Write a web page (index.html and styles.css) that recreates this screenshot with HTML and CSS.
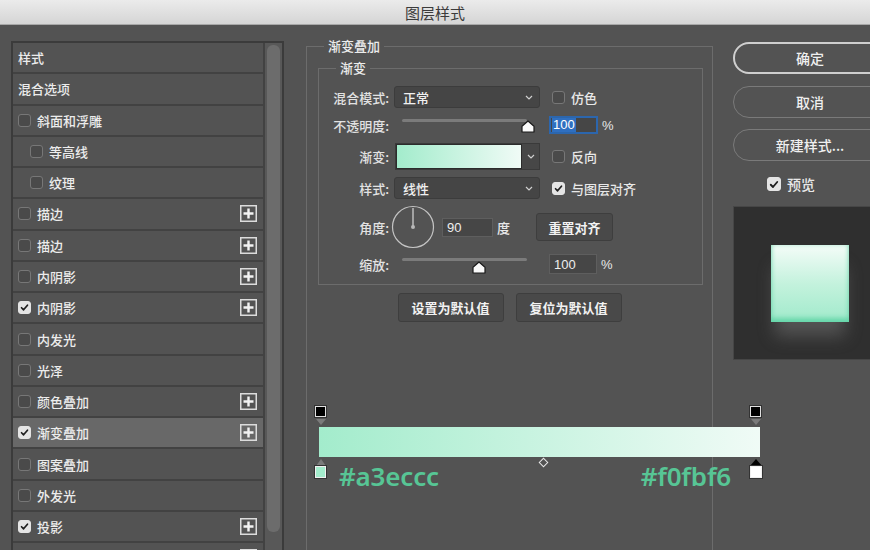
FILE: index.html
```html
<!DOCTYPE html>
<html lang="zh">
<head>
<meta charset="utf-8">
<title>图层样式</title>
<link rel="stylesheet" href="styles.css">
</head>
<body>
<div class="titlebar">图层样式</div>
<div class="content">
  <div class="stylelist">
    <div class="rows">
      <div class="row">样式</div>
      <div class="row">混合选项</div>
      <div class="row"><span class="cb"></span>斜面和浮雕</div>
      <div class="row indent"><span class="cb"></span>等高线</div>
      <div class="row indent"><span class="cb"></span>纹理</div>
      <div class="row"><span class="cb"></span>描边<svg class="plus" viewBox="0 0 17 17"><rect x="0.75" y="0.75" width="15.5" height="15.5"/><path d="M8.5 3.5V13.5M3.5 8.5H13.5"/></svg></div>
      <div class="row"><span class="cb"></span>描边<svg class="plus" viewBox="0 0 17 17"><rect x="0.75" y="0.75" width="15.5" height="15.5"/><path d="M8.5 3.5V13.5M3.5 8.5H13.5"/></svg></div>
      <div class="row"><span class="cb"></span>内阴影<svg class="plus" viewBox="0 0 17 17"><rect x="0.75" y="0.75" width="15.5" height="15.5"/><path d="M8.5 3.5V13.5M3.5 8.5H13.5"/></svg></div>
      <div class="row"><span class="cb on"><svg viewBox="0 0 13 13"><path d="M3 6.8L5.4 9.2L10 3.8"/></svg></span>内阴影<svg class="plus" viewBox="0 0 17 17"><rect x="0.75" y="0.75" width="15.5" height="15.5"/><path d="M8.5 3.5V13.5M3.5 8.5H13.5"/></svg></div>
      <div class="row"><span class="cb"></span>内发光</div>
      <div class="row"><span class="cb"></span>光泽</div>
      <div class="row"><span class="cb"></span>颜色叠加<svg class="plus" viewBox="0 0 17 17"><rect x="0.75" y="0.75" width="15.5" height="15.5"/><path d="M8.5 3.5V13.5M3.5 8.5H13.5"/></svg></div>
      <div class="row selected"><span class="cb on"><svg viewBox="0 0 13 13"><path d="M3 6.8L5.4 9.2L10 3.8"/></svg></span>渐变叠加<svg class="plus" viewBox="0 0 17 17"><rect x="0.75" y="0.75" width="15.5" height="15.5"/><path d="M8.5 3.5V13.5M3.5 8.5H13.5"/></svg></div>
      <div class="row"><span class="cb"></span>图案叠加</div>
      <div class="row"><span class="cb"></span>外发光</div>
      <div class="row"><span class="cb on"><svg viewBox="0 0 13 13"><path d="M3 6.8L5.4 9.2L10 3.8"/></svg></span>投影<svg class="plus" viewBox="0 0 17 17"><rect x="0.75" y="0.75" width="15.5" height="15.5"/><path d="M8.5 3.5V13.5M3.5 8.5H13.5"/></svg></div>
      <div class="row"><span class="cb"></span><svg class="plus" viewBox="0 0 17 17"><rect x="0.75" y="0.75" width="15.5" height="15.5"/><path d="M8.5 3.5V13.5M3.5 8.5H13.5"/></svg></div>
    </div>
    <div class="scroll"><div class="thumb"></div></div>
  </div>

  <div class="center">
    <div class="group outer">
      <div class="group-title">渐变叠加</div>
      <div class="group inner">
        <div class="group-title">渐变</div>

        <div class="frow r1">
          <span class="flabel">混合模式:</span>
          <div class="select"><span>正常</span><svg class="chev" viewBox="0 0 8 5"><path d="M1 1L4 4L7 1"/></svg></div>
          <span class="cb opt"></span><span>仿色</span>
        </div>

        <div class="frow r2">
          <span class="flabel">不透明度:</span>
          <div class="slider"><div class="track"></div><svg class="knob k-opacity" viewBox="0 0 14 13"><path d="M7 1L13 6.2V12H1V6.2Z"/></svg></div>
          <div class="num focus"><span class="sel">100</span></div>
          <span class="pct">%</span>
        </div>

        <div class="frow r3">
          <span class="flabel">渐变:</span>
          <div class="gradfield"><div class="swatch"></div><div class="gdrop"><svg class="chev" viewBox="0 0 8 5"><path d="M1 1L4 4L7 1"/></svg></div></div>
          <span class="cb opt"></span><span>反向</span>
        </div>

        <div class="frow r4">
          <span class="flabel">样式:</span>
          <div class="select"><span>线性</span><svg class="chev" viewBox="0 0 8 5"><path d="M1 1L4 4L7 1"/></svg></div>
          <span class="cb on opt"><svg viewBox="0 0 13 13"><path d="M3 6.8L5.4 9.2L10 3.8"/></svg></span><span>与图层对齐</span>
        </div>

        <div class="frow r5">
          <span class="flabel">角度:</span>
          <svg class="dial" viewBox="0 0 44 44"><circle cx="22" cy="22" r="20.5"/><path d="M22 22V3"/><circle class="dot" cx="22" cy="22" r="2"/></svg>
          <div class="num n90">90</div>
          <span class="unit">度</span>
          <div class="btn reset">重置对齐</div>
        </div>

        <div class="frow r6">
          <span class="flabel">缩放:</span>
          <div class="slider"><div class="track"></div><svg class="knob k-scale" viewBox="0 0 14 13"><path d="M7 1L13 6.2V12H1V6.2Z"/></svg></div>
          <div class="num n100">100</div>
          <span class="pct">%</span>
        </div>
      </div>
      <div class="btn-row">
        <div class="btn def">设置为默认值</div>
        <div class="btn def">复位为默认值</div>
      </div>
    </div>
  </div>

  <div class="right">
    <div class="pill primary">确定</div>
    <div class="pill p2">取消</div>
    <div class="pill p3">新建样式...</div>
    <div class="preview-check"><span class="cb on big"><svg viewBox="0 0 13 13"><path d="M3 6.8L5.4 9.2L10 3.8"/></svg></span>预览</div>
    <div class="preview"><div class="sample"></div></div>
  </div>
</div>

<div class="gradient-editor">
  <div class="stops-top">
    <div class="tstop"><div class="tsq"></div><div class="tri-down"></div></div>
    <div class="tstop"><div class="tsq"></div><div class="tri-down"></div></div>
  </div>
  <div class="gbar"></div>
  <div class="stops-bottom">
    <div class="bstop"><div class="tri-up"></div><div class="bsq green"></div></div>
    <span class="hex">#a3eccc</span>
    <span class="mid"></span>
    <span class="hex hex-r">#f0fbf6</span>
    <div class="bstop"><div class="tri-up dark"></div><div class="bsq white"></div></div>
  </div>
</div>
</body>
</html>
```

FILE: styles.css
```css
* { box-sizing: border-box; }

body {
  margin: 0;
  width: 870px;
  height: 550px;
  overflow: hidden;
  position: relative;
  background: #535353;
  font-family: "Noto Sans CJK SC", "Noto Sans", sans-serif;
  font-size: 13px;
  font-weight: 500;
  color: #e8e8e8;
}

.titlebar {
  height: 25px;
  display: flex;
  align-items: center;
  justify-content: center;
  background: linear-gradient(#ebebeb, #d5d5d5);
  border-bottom: 1px solid #a8a8a8;
  color: #3b3b3b;
  font-size: 15px;
  font-weight: 400;
}

.content {
  display: flex;
  align-items: flex-start;
  padding: 16px 0 0 11px;
  height: 525px;
  overflow: hidden;
}

/* ---------- left style list ---------- */
.stylelist {
  flex: none;
  width: 273px;
  height: 560px;
  display: flex;
  border: 2px solid #3b3b3b;
  background: #535353;
}

.rows {
  width: 252px;
  border-right: 2px solid #424242;
}

.row {
  height: 31.27px;
  border-bottom: 2px solid #424242;
  display: flex;
  align-items: center;
  padding: 0 6px 0 5px;
  line-height: 1;
  color: #ececec;
}
.row.indent { padding-left: 17px; }
.row.selected { background: #686868; }

.cb {
  flex: none;
  width: 13px;
  height: 13px;
  border: 1px solid #777;
  border-radius: 3px;
  background: #4a4a4a;
  margin-right: 6px;
  display: flex;
  align-items: center;
  justify-content: center;
}
.cb.on {
  background: #e4e4e4;
  border-color: #e4e4e4;
}
.cb svg { width: 13px; height: 13px; }
.cb svg path {
  fill: none;
  stroke: #1e1e1e;
  stroke-width: 2;
  stroke-linecap: round;
  stroke-linejoin: round;
}

.plus {
  margin-left: auto;
  width: 17px;
  height: 17px;
}
.plus rect { fill: none; stroke: #dcdcdc; stroke-width: 1.5; }
.plus path { stroke: #f2f2f2; stroke-width: 2.4; }

.scroll {
  flex: 1;
  background: #585858;
  padding: 2px 2px 0 2px;
}
.thumb {
  height: 487px;
  border-radius: 6px;
  background: #6c6c6c;
}

/* ---------- center ---------- */
.center {
  flex: none;
  margin-left: 22px;
  margin-top: 5px;
  width: 407px;
}

.group { border: 1px solid #6c6c6c; }
.group.outer { height: 620px; }
.group-title {
  width: fit-content;
  margin: -10px 0 0 17px;
  padding: 0 4px;
  line-height: 18px;
  background: #535353;
  color: #ececec;
}
.group.inner {
  margin: 13px 9px 0 11px;
  padding-bottom: 10px;
}

.frow {
  display: flex;
  align-items: center;
}
.r1 { margin-top: 9px; height: 22px; }
.r2 { margin-top: 8px; height: 18px; }
.r3 { margin-top: 9px; height: 27px; }
.r4 { margin-top: 7px; height: 22px; }
.r5 { margin-top: 7px; height: 42px; }
.r6 { margin-top: 6px; height: 20px; }

.flabel {
  width: 70px;
  text-align: right;
  margin-right: 5px;
  color: #e2e2e2;
}

.select {
  width: 146px;
  height: 22px;
  background: #454545;
  border: 1px solid #3c3c3c;
  border-radius: 3px;
  display: flex;
  align-items: center;
  padding: 0 6px 0 8px;
  color: #f0f0f0;
}
.select .chev { margin-left: auto; }
.chev { width: 8px; height: 5px; }
.chev path { fill: none; stroke: #d0d0d0; stroke-width: 1.2; }

.opt { margin-left: 12px; margin-right: 6px; }

.slider {
  position: relative;
  width: 125px;
  height: 100%;
  margin-left: 8px;
}
.track {
  margin-top: 3px;
  height: 3px;
  border-radius: 2px;
  background: #7b7b7b;
}
.r6 .track { margin-top: 4px; }
.knob {
  position: absolute;
  width: 14px;
  height: 13px;
}
.knob path { fill: #fafafa; stroke: #1a1a1a; stroke-width: 1.2; stroke-linejoin: round; }
.k-opacity { left: 119px; top: 4px; }
.k-scale { left: 70px; top: 7px; }

.num {
  height: 18px;
  width: 49px;
  margin-left: 22px;
  background: #464646;
  border: 1px solid #5e5e5e;
  display: flex;
  align-items: center;
  padding-left: 2px;
  color: #eee;
  font-family: "Liberation Sans", sans-serif;
  font-size: 13px;
}
.num.focus {
  border: 2px solid #2c66ad;
  padding-left: 1px;
}
.sel {
  background: #2f6fc0;
  color: #fff;
  padding: 0 1px;
  line-height: 14px;
}
.pct { margin-left: 4px; font-family: "Liberation Sans", sans-serif; }

.gradfield {
  display: flex;
  margin-left: 1px;
  width: 145px;
  height: 27px;
  border: 1px solid #3a3a3a;
}
.swatch {
  flex: 1;
  background: linear-gradient(90deg, #a3eccc, #f0fbf6);
  border: 1px solid #2c2c2c;
}
.gdrop {
  width: 17px;
  background: #474747;
  display: flex;
  align-items: center;
  justify-content: center;
}

.dial { width: 44px; height: 44px; margin-left: -3px; }
.dial circle { fill: none; stroke: #c4c4c4; stroke-width: 1.2; }
.dial path { stroke: #d8d8d8; stroke-width: 1.2; }
.dial .dot { fill: #b8b8b8; stroke: none; }

.n90 { width: 51px; height: 19px; margin-left: 7px; padding-left: 4px; }
.unit { margin-left: 4px; }

.btn {
  display: flex;
  align-items: center;
  justify-content: center;
  background: #494949;
  border: 1px solid #3e3e3e;
  border-radius: 3px;
  color: #f2f2f2;
  font-weight: bold;
}
.reset { width: 77px; height: 28px; margin-left: 26px; }

.n100 { width: 48px; height: 20px; margin-left: 22px; padding-left: 4px; }

.btn-row {
  display: flex;
  justify-content: center;
  gap: 12px;
  margin-top: 8px;
}
.btn.def { width: 106px; height: 29px; }

/* ---------- right column ---------- */
.right {
  flex: none;
  width: 154px;
  margin-left: 20px;
}
.pill {
  height: 32px;
  border: 1px solid #7a7a7a;
  border-radius: 16px;
  display: flex;
  align-items: center;
  justify-content: center;
  font-size: 14px;
  color: #f0f0f0;
}
.pill.primary { margin-top: 1px; border: 2px solid #cfcfcf; }
.p2 { margin-top: 12px; }
.p3 { margin-top: 11px; }

.preview-check {
  margin-top: 16px;
  height: 14px;
  padding-left: 34px;
  display: flex;
  align-items: center;
  font-size: 14px;
}
.cb.big { width: 14px; height: 14px; }

.preview {
  margin-top: 15px;
  height: 154px;
  width: 145px;
  background: #2f2f2f;
  border: 1px solid #464646;
  padding: 38px 0 0 37px;
}
.sample {
  width: 78px;
  height: 77px;
  background: linear-gradient(#f4fcf8, #c4f2dd 50%, #a0eacb);
  box-shadow:
    inset 0 -4px 5px rgba(60, 200, 145, 0.55),
    inset 0 0 4px rgba(120, 220, 180, 0.5),
    0 18px 16px -4px rgba(140, 140, 140, 0.4);
}

/* ---------- gradient editor overlay ---------- */
.gradient-editor {
  position: absolute;
  left: 315px;
  top: 406px;
  width: 447px;
}
.stops-top {
  display: flex;
  justify-content: space-between;
  padding-right: 1px;
  height: 21px;
}
.tstop { width: 11px; }
.tsq {
  width: 11px;
  height: 11px;
  background: #000;
  border: 1px solid #e0e0e0;
  outline: 1px solid #333;
}
.tri-down {
  margin: 2px auto 0;
  width: 0;
  height: 0;
  border-left: 5px solid transparent;
  border-right: 5px solid transparent;
  border-top: 6px solid #7a7a7a;
}
.gbar {
  margin-left: 4px;
  width: 441px;
  height: 30px;
  background: linear-gradient(90deg, #a3eccc, #f0fbf6);
}
.stops-bottom {
  position: relative;
  display: flex;
  align-items: flex-start;
  margin-top: 2px;
}
.bstop { width: 12px; flex: none; }
.tri-up {
  margin: 0 auto;
  width: 0;
  height: 0;
  border-left: 5px solid transparent;
  border-right: 5px solid transparent;
  border-bottom: 7px solid #7a7a7a;
}
.tri-up.dark { border-bottom-color: #000; border-left-width: 6px; border-right-width: 6px; }
.bsq {
  width: 12px;
  height: 12px;
  border: 1px solid #f0f0f0;
  outline: 1px solid #333;
}
.bsq.green { background: #a3eccc; width: 11px; }
.bsq.white { background: #fff; }

.hex {
  font-family: "Noto Sans", "Open Sans", sans-serif;
  font-size: 26px;
  font-weight: 600;
  line-height: 27px;
  margin-top: 4px;
  margin-left: 12px;
  color: #57c595;
  letter-spacing: -0.2px;
}
.hex-r { margin-left: auto; margin-right: 19px; }
.mid {
  position: absolute;
  left: 225px;
  top: 0;
  width: 7px;
  height: 7px;
  border: 1.5px solid #e8e8e8;
  transform: rotate(45deg);
}
```
